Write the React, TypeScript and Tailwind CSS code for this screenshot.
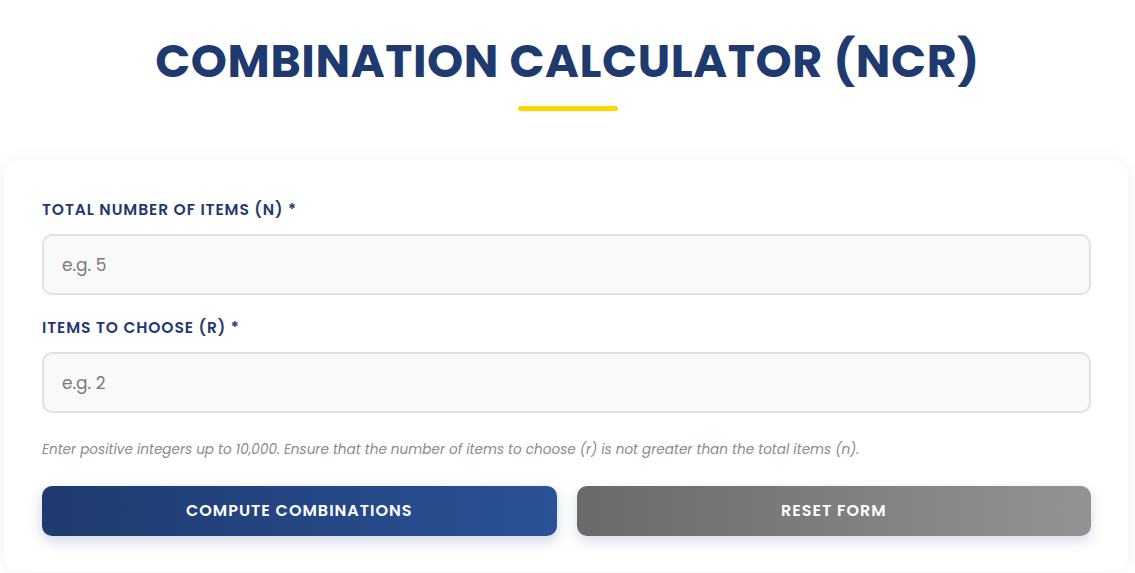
import { useState } from "react";

const FONT = { fontFamily: "Poppins, Inter, 'Noto Sans', sans-serif" };

function Field({ label, placeholder, value, onChange }: { label: string; placeholder: string; value: string; onChange: (v: string) => void }) {
  return (
    <div>
      <label className="block text-[15.5px] font-semibold uppercase tracking-[0.9px] text-[#1f3a6e] leading-[20px]">
        {label} *
      </label>
      <input
        type="number"
        value={value}
        onChange={(e) => onChange(e.target.value)}
        placeholder={placeholder}
        className="mt-[14px] block h-[61px] w-full rounded-[10px] border-2 border-[#e2e2e2] bg-[#f9f9f9] px-[18px] text-[17px] text-[#333] outline-none placeholder:text-[#7a7a7a]"
        style={FONT}
      />
    </div>
  );
}

export default function App() {
  const [n, setN] = useState("");
  const [r, setR] = useState("");

  return (
    <div className="min-h-[573px] bg-white" style={FONT}>
      <div className="flex flex-col items-center pt-[32px]">
        <h1 className="text-[46px] font-bold leading-[58px] tracking-[0.6px] text-[#1f3a6e]">COMBINATION CALCULATOR (NCR)</h1>
        <div className="mt-[16px] h-[5px] w-[100px] rounded-full bg-[#ffd600]" />
      </div>

      <div className="ml-[4px] mt-[49px] w-[1124px] rounded-[16px] bg-white pb-[36px] pl-[38px] pr-[37px] pt-[40px] shadow-[0_0_18px_rgba(0,0,0,0.06)]">
        <Field label="Total number of items (n)" placeholder="e.g. 5" value={n} onChange={setN} />
        <div className="mt-[23px]">
          <Field label="Items to choose (r)" placeholder="e.g. 2" value={r} onChange={setR} />
        </div>
        <p className="mt-[28px] text-[13.6px] italic leading-[18px] text-[#8a8a8a]">
          Enter positive integers up to 10,000. Ensure that the number of items to choose (r) is not greater than the total items (n).
        </p>
        <div className="mt-[27px] grid grid-cols-2 gap-[20px]">
          <button
            className="h-[50px] rounded-[10px] bg-gradient-to-r from-[#1f3a6e] to-[#2a5298] text-[16px] font-semibold uppercase tracking-[1px] text-white shadow-[0_5px_14px_rgba(30,60,120,0.22)]"
            style={FONT}
          >
            Compute Combinations
          </button>
          <button
            onClick={() => {
              setN("");
              setR("");
            }}
            className="h-[50px] rounded-[10px] bg-gradient-to-r from-[#6a6a6a] to-[#939393] text-[16px] font-semibold uppercase tracking-[1px] text-white shadow-[0_5px_14px_rgba(30,60,120,0.18)]"
            style={FONT}
          >
            Reset Form
          </button>
        </div>
      </div>
    </div>
  );
}
